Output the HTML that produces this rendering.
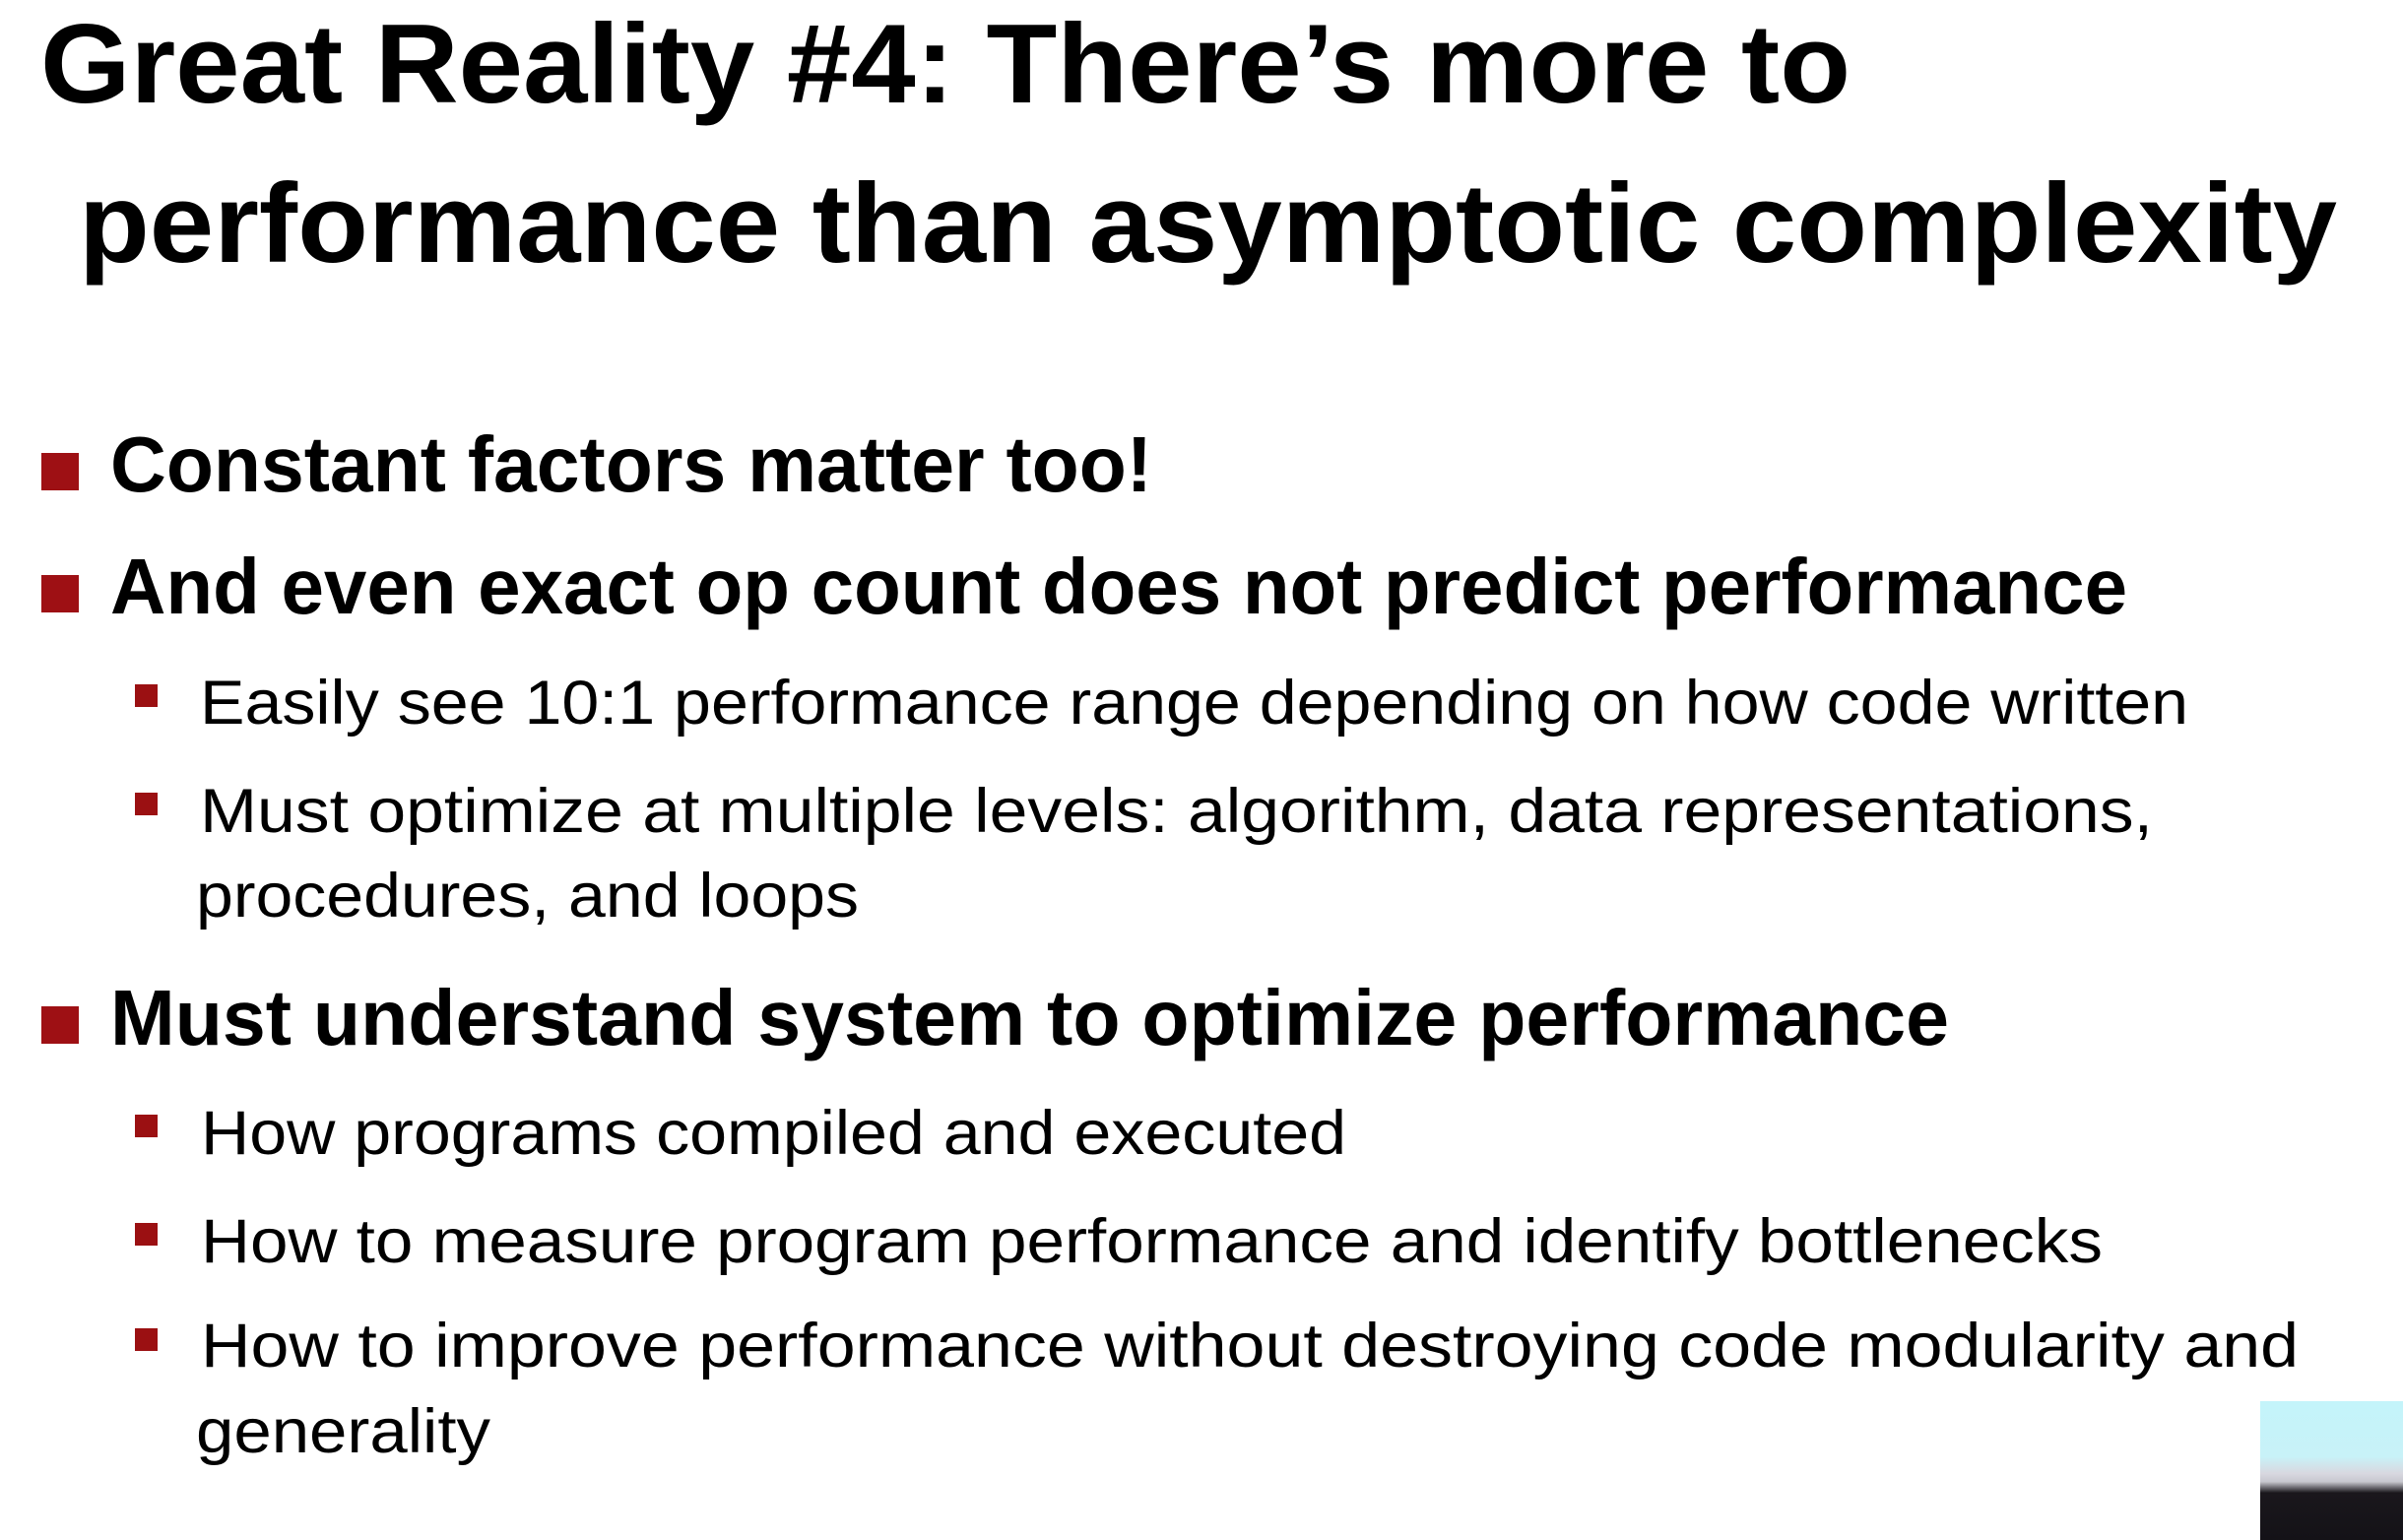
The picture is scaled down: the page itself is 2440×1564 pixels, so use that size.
<!DOCTYPE html>
<html><head><meta charset="utf-8">
<style>
html,body{margin:0;padding:0;}
body{width:2440px;height:1564px;background:#fff;position:relative;overflow:hidden;font-family:"Liberation Sans",sans-serif;color:#000;}
.t{position:absolute;white-space:nowrap;line-height:normal;transform-origin:0 0;}
.b{font-weight:bold;}
.h{font-size:114px;}
.l1{font-size:80px;}
.l2{font-size:63px;}
.sq1{position:absolute;width:38px;height:38px;background:#9e1014;left:42px;}
.sq2{position:absolute;width:23px;height:23px;background:#9b1012;left:137px;}
</style></head><body>
<div class="t b h" style="left:41px;top:0px" id="a0">Great Reality #4: There’s more to</div>
<div class="t b h" style="left:80px;top:0px" id="a1">performance than asymptotic complexity</div>

<div class="sq1" style="top:460px"></div>
<div class="t b l1" id="a2" style="left:112px">Constant factors matter too!</div>
<div class="sq1" style="top:584px"></div>
<div class="t b l1" id="a3" style="left:112px">And even exact op count does not predict performance</div>

<div class="sq2" style="top:695px"></div>
<div class="t l2" id="a4" style="left:203px">Easily see 10:1 performance range depending on how code written</div>
<div class="sq2" style="top:805px"></div>
<div class="t l2" id="a5" style="left:203px">Must optimize at multiple levels: algorithm, data representations,</div>
<div class="t l2" id="a6" style="left:199px">procedures, and loops</div>

<div class="sq1" style="top:1022px"></div>
<div class="t b l1" id="a7" style="left:112px">Must understand system to optimize performance</div>

<div class="sq2" style="top:1132px"></div>
<div class="t l2" id="a8" style="left:204px">How programs compiled and executed</div>
<div class="sq2" style="top:1242px"></div>
<div class="t l2" id="a9" style="left:204px">How to measure program performance and identify bottlenecks</div>
<div class="sq2" style="top:1349px"></div>
<div class="t l2" id="a10" style="left:204px">How to improve performance without destroying code modularity and</div>
<div class="t l2" id="a11" style="left:199px">generality</div>

<div style="position:absolute;left:2295px;top:1423px;width:145px;height:141px;background:linear-gradient(#c4f4fa 0%,#c8f2f8 40%,#d8d8e0 52%,#c8c8d0 58%,#1a171c 66%,#141217 100%);"></div>

<script>
var L=[["a0",103,1879,114],["a1",265,2373,114],["a2",498,1170,80],["a3",622,2160,80],
["a4",735,2222,63],["a5",845,2186,63],["a6",931,872,63],["a7",1060,1979,80],
["a8",1172,1367,63],["a9",1282,2135,63],["a10",1388,2334,63],["a11",1475,498,63]];
L.forEach(function(r){
 var e=document.getElementById(r[0]);
 e.style.top=(r[1]-0.905*r[3])+"px";
 var left=parseFloat(e.style.left);
 var w=e.getBoundingClientRect().width;
 e.style.transform="scaleX("+((r[2]-left)/w)+")";
});
</script>
</body></html>
